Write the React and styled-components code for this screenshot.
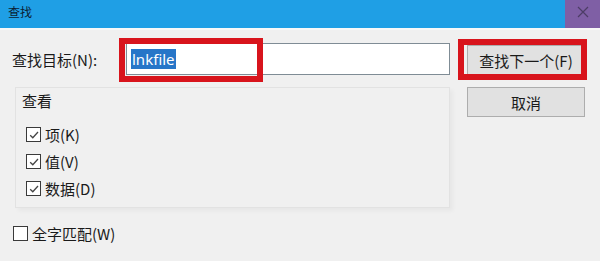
import React from 'react'
import styled, { createGlobalStyle } from 'styled-components'

const Global = createGlobalStyle`
    html, body {
        margin: 0;
        padding: 0;
        background: #f0f0f0;
    }
    body {
        font-family: "Noto Sans CJK SC", "Noto Sans", sans-serif;
        color: #1a1a1a;
    }
`;

function Check({ checked }) {
    return <Box>
        {checked && <svg width="12" height="12" viewBox="0 0 12 12">
            <path d="M2.2 6.2 L4.8 8.8 L10 3" fill="none" stroke="#444" strokeWidth="1.3" />
        </svg>}
    </Box>;
}

function Option({ label, checked, ...rest }) {
    return <OptionRow {...rest}>
        <Check checked={checked} />
        <span>{label}</span>
    </OptionRow>;
}

export default function App() {
    return <Window>
        <Global />
        <TitleBar>
            <Title>查找</Title>
            <CloseBox>
                <svg width="12" height="12" viewBox="0 0 12 12">
                    <path d="M1 1 L11 11 M11 1 L1 11" stroke="#4d3d66" strokeWidth="1.2" />
                </svg>
            </CloseBox>
        </TitleBar>
        <Body>
            <LeftColumn>
                <SearchRow>
                    <Label>查找目标(N):</Label>
                    <InputWrap>
                        <Input><Selected>lnkfile</Selected></Input>
                        <Highlight $left={-7} $top={-5} $width={144} $height={44} />
                    </InputWrap>
                </SearchRow>
                <GroupBox>
                    <Legend>查看</Legend>
                    <Option label="项(K)" checked />
                    <Option label="值(V)" checked />
                    <Option label="数据(D)" checked />
                </GroupBox>
                <WholeWord label="全字匹配(W)" />
            </LeftColumn>
            <RightColumn>
                <ButtonWrap>
                    <Button>查找下一个(F)</Button>
                    <Highlight $left={-9} $top={-6} $width={129} $height={41} />
                </ButtonWrap>
                <Button>取消</Button>
            </RightColumn>
        </Body>
    </Window>;
}

const Window = styled.div`
    width: 600px;
    height: 261px;
    background: #f0f0f0;
    overflow: hidden;
`;
const TitleBar = styled.div`
    height: 28px;
    background: #1f9fe5;
    display: flex;
    justify-content: space-between;
    align-items: stretch;
    border-bottom: 2px solid #f8f8f8;
`;
const Title = styled.div`
    font-size: 12px;
    line-height: 24px;
    padding-left: 8px;
    color: #0b1d33;
`;
const CloseBox = styled.div`
    width: 35px;
    background: #7f5fa5;
    display: flex;
    align-items: center;
    justify-content: center;
    padding-bottom: 4px;
    box-sizing: border-box;
`;
const Body = styled.div`
    display: flex;
    gap: 17px;
    padding: 13px 0 0 12px;
`;
const LeftColumn = styled.div`
    width: 438px;
    display: flex;
    flex-direction: column;
`;
const SearchRow = styled.div`
    display: flex;
    align-items: center;
    height: 32px;
`;
const Label = styled.div`
    width: 114px;
    font-size: 15px;
`;
const InputWrap = styled.div`
    position: relative;
    flex: 1;
    height: 32px;
`;
const Input = styled.div`
    height: 100%;
    box-sizing: border-box;
    background: #fff;
    border: 1px solid #7f8c95;
    padding: 3px 4px;
    display: flex;
    align-items: center;
`;
const Selected = styled.span`
    background: #2776c8;
    color: #fff;
    font-family: "Noto Sans", sans-serif;
    font-size: 15px;
    line-height: 20px;
    padding: 0 1px;
`;
const Highlight = styled.div`
    position: absolute;
    left: ${p => p.$left}px;
    top: ${p => p.$top}px;
    width: ${p => p.$width}px;
    height: ${p => p.$height}px;
    box-sizing: border-box;
    border: 6px solid #d8141c;
    pointer-events: none;
`;
const GroupBox = styled.div`
    margin: 12px 0 0 3px;
    height: 121px;
    box-sizing: border-box;
    border: 1px solid #e2e2e2;
    box-shadow: 3px 3px 4px rgba(0, 0, 0, 0.04);
    padding: 3px 0 0 10px;
    display: flex;
    flex-direction: column;
`;
const Legend = styled.div`
    font-size: 15px;
    line-height: 20px;
    margin-left: -4px;
    margin-bottom: 10px;
`;
const OptionRow = styled.div`
    display: flex;
    align-items: center;
    gap: 4px;
    height: 27px;
    font-size: 15px;
`;
const WholeWord = styled(Option)`
    margin-top: 12px;
    margin-left: 1px;
`;
const Box = styled.div`
    width: 15px;
    height: 15px;
    box-sizing: border-box;
    border: 1px solid #3a3a3a;
    background: #fff;
    display: flex;
    align-items: center;
    justify-content: center;
`;
const RightColumn = styled.div`
    display: flex;
    flex-direction: column;
    gap: 12px;
    padding-top: 2px;
`;
const ButtonWrap = styled.div`
    position: relative;
`;
const Button = styled.div`
    width: 118px;
    height: 30px;
    box-sizing: border-box;
    background: #e1e1e1;
    border: 1px solid #adadad;
    font-size: 15px;
    display: flex;
    align-items: center;
    justify-content: center;
`;
